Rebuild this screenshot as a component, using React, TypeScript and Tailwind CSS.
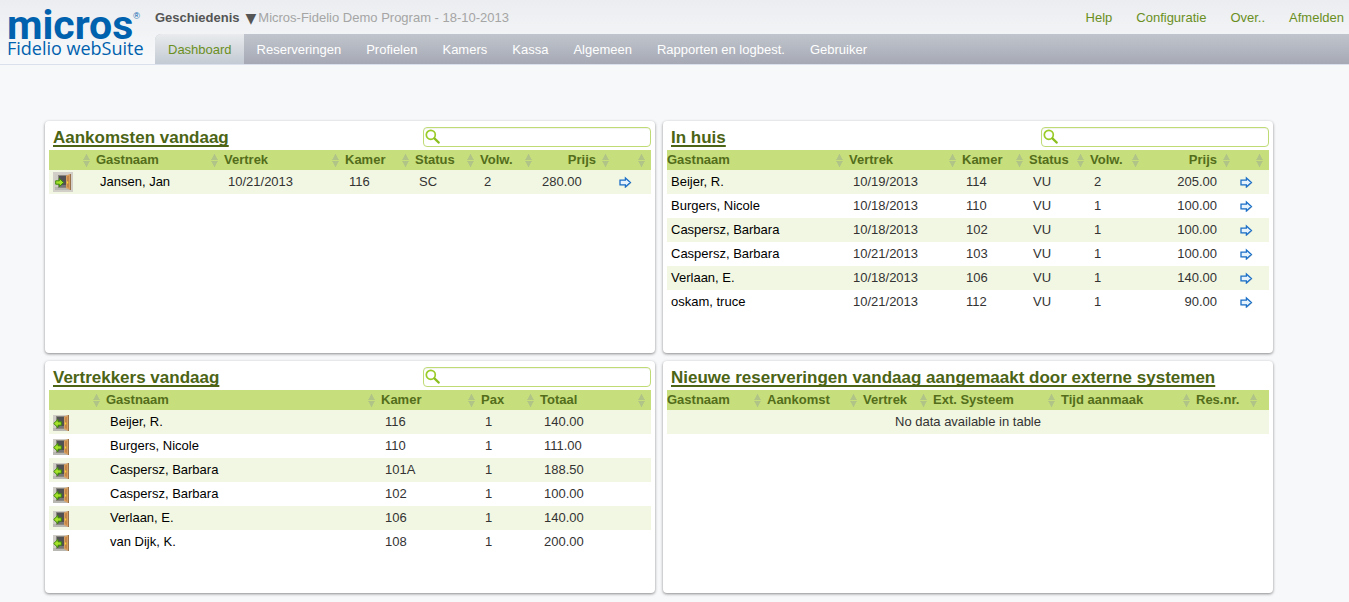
import React from 'react';

interface Column {
  label: string;
  // width class of the column, empty for the one that takes the rest
  width: string;
  sortable?: boolean;
  alignRight?: boolean;
}

interface Reservation {
  name: string;
  departure: string;
  room: string;
  status: string;
  adults: number;
  price: string;
}

interface Departure {
  name: string;
  room: string;
  pax: number;
  total: string;
}

const MENU = [
  'Dashboard',
  'Reserveringen',
  'Profielen',
  'Kamers',
  'Kassa',
  'Algemeen',
  'Rapporten en logbest.',
  'Gebruiker',
];

const USER_LINKS = ['Help', 'Configuratie', 'Over..', 'Afmelden'];

const ARRIVALS: Reservation[] = [
  { name: 'Jansen, Jan', departure: '10/21/2013', room: '116', status: 'SC', adults: 2, price: '280.00' },
];

const IN_HOUSE: Reservation[] = [
  { name: 'Beijer, R.', departure: '10/19/2013', room: '114', status: 'VU', adults: 2, price: '205.00' },
  { name: 'Burgers, Nicole', departure: '10/18/2013', room: '110', status: 'VU', adults: 1, price: '100.00' },
  { name: 'Caspersz, Barbara', departure: '10/18/2013', room: '102', status: 'VU', adults: 1, price: '100.00' },
  { name: 'Caspersz, Barbara', departure: '10/21/2013', room: '103', status: 'VU', adults: 1, price: '100.00' },
  { name: 'Verlaan, E.', departure: '10/18/2013', room: '106', status: 'VU', adults: 1, price: '140.00' },
  { name: 'oskam, truce', departure: '10/21/2013', room: '112', status: 'VU', adults: 1, price: '90.00' },
];

const DEPARTURES: Departure[] = [
  { name: 'Beijer, R.', room: '116', pax: 1, total: '140.00' },
  { name: 'Burgers, Nicole', room: '110', pax: 1, total: '111.00' },
  { name: 'Caspersz, Barbara', room: '101A', pax: 1, total: '188.50' },
  { name: 'Caspersz, Barbara', room: '102', pax: 1, total: '100.00' },
  { name: 'Verlaan, E.', room: '106', pax: 1, total: '140.00' },
  { name: 'van Dijk, K.', room: '108', pax: 1, total: '200.00' },
];

const ARRIVAL_COLUMNS: Column[] = [
  { label: '', width: 'w-[47px]' },
  { label: 'Gastnaam', width: '' },
  { label: 'Vertrek', width: 'w-[121px]' },
  { label: 'Kamer', width: 'w-[70px]' },
  { label: 'Status', width: 'w-[65px]' },
  { label: 'Volw.', width: 'w-[58px]' },
  { label: 'Prijs', width: 'w-[77px]', alignRight: true },
  { label: '', width: 'w-[36px]' },
];

const IN_HOUSE_COLUMNS: Column[] = [
  { label: 'Gastnaam', width: '' },
  { label: 'Vertrek', width: 'w-[113px]' },
  { label: 'Kamer', width: 'w-[67px]' },
  { label: 'Status', width: 'w-[61px]' },
  { label: 'Volw.', width: 'w-[55px]' },
  { label: 'Prijs', width: 'w-[91px]', alignRight: true },
  { label: '', width: 'w-[33px]' },
];

const DEPARTURE_COLUMNS: Column[] = [
  { label: '', width: 'w-[57px]' },
  { label: 'Gastnaam', width: '' },
  { label: 'Kamer', width: 'w-[100px]' },
  { label: 'Pax', width: 'w-[59px]' },
  { label: 'Totaal', width: 'w-[111px]' },
];

const EXTERNAL_COLUMNS: Column[] = [
  { label: 'Gastnaam', width: '' },
  { label: 'Aankomst', width: 'w-[96px]' },
  { label: 'Vertrek', width: 'w-[70px]' },
  { label: 'Ext. Systeem', width: 'w-[128px]' },
  { label: 'Tijd aanmaak', width: 'w-[135px]' },
  { label: 'Res.nr.', width: 'w-[67px]' },
  { label: '', width: 'w-[6px]', sortable: false },
];

const SortIcon: React.FC = () => (
  <svg width="7" height="13" viewBox="0 0 7 13" className="shrink-0 fill-[#b1c487]" aria-hidden="true">
    <path d="M3 0h1v1l1 1v1l1 1v1l1 .5V6H0v-.5L1 5V4l1-1V2l1-1z" />
    <path d="M0 7h7v.5L6 8v1l-1 1v1l-1 1v1H3v-1l-1-1v-1L1 9V8l-1-.5z" />
  </svg>
);

const SearchIcon: React.FC = () => (
  <svg width="16" height="16" viewBox="0 0 16 16" fill="none" aria-hidden="true">
    <circle cx="5.8" cy="5.8" r="4.5" stroke="#9acb28" strokeWidth="1.7" />
    <path d="M9.4 9.4l4.4 4.2" stroke="#8cc01f" strokeWidth="2.2" strokeLinecap="round" />
  </svg>
);

const GoIcon: React.FC = () => (
  <svg width="13" height="12" viewBox="0 0 13 12" aria-hidden="true">
    <path d="M2 5h5V2.6L12.6 7 7 11.8V9.6H2z" fill="#c9cdbd" opacity=".7" />
    <path d="M1 4.2h5.4V2L11.4 6.5l-5 4.5V8.8H1z" fill="#e6f3fd" stroke="#1b6fc8" strokeWidth="1.3" />
  </svg>
);

const DoorIcon: React.FC<{ out?: boolean }> = ({ out }) => (
  <svg width="16" height="16" viewBox="0 0 16 16" aria-hidden="true">
    <path d="M0 0h16v16H0z" fill="#cfccc5" />
    <path d="M0 13h16v3H0z" fill="#b9b7b2" />
    <path d="M3 1h9v13H3z" fill="#8a8780" />
    <path d="M4 2h8v11H4z" fill="#515153" />
    <path d="M4 13l3-2h5v2z" fill="#77777a" />
    <path d="M11 1.5L15 0v16l-4-2z" fill="#d79f62" />
    <path d="M12 2.5l2-.8v12.4l-2-1z" fill="#c58748" />
    <path d="M15 0h1v16h-1z" fill="#98714b" />
    <path d="M12 7.5h1.2v2H12z" fill="#f5d92c" />
    {out ? (
      <path d="M.7 8.5L5 4.4v2.4h3.3v3.4H5v2.4z" fill="#a6e22a" stroke="#3f8a0c" />
    ) : (
      <path d="M8.6 8.5L4.3 4.4v2.4H.7v3.4h3.6v2.4z" fill="#a6e22a" stroke="#3f8a0c" />
    )}
  </svg>
);

const Panel: React.FC<{ title: string; search?: boolean; children: React.ReactNode }> = ({ title, search, children }) => (
  <section className="min-h-58 min-w-0 rounded bg-white px-1 shadow-[0_1px_3px_rgba(0,0,0,0.45)]">
    <div className="flex h-[29px] items-start justify-between">
      <h2 className="pt-[5px] pl-1 text-[17px] leading-6 font-bold whitespace-nowrap text-[#4c6415] underline decoration-2 underline-offset-2 [text-decoration-skip-ink:none]">
        {title}
      </h2>
      {search && (
        <label className="relative mt-1.5 block w-57">
          <span className="absolute top-0.5 left-0.5">
            <SearchIcon />
          </span>
          <input
            type="text"
            aria-label={`Zoeken in ${title}`}
            className="block h-5 w-full rounded border border-[#bfdb76] bg-white pr-1 pl-5 text-[13px] shadow-[inset_0_1px_1px_rgba(0,0,0,0.06)] outline-none"
          />
        </label>
      )}
    </div>
    {children}
  </section>
);

const DataTable: React.FC<{ columns: Column[]; children: React.ReactNode }> = ({ columns, children }) => (
  <table className="w-full table-fixed text-[13px] leading-5 text-[#333]">
    <thead>
      <tr className="h-5 bg-[#c6de7c] text-[#536d1b]">
        {columns.map((col, i) => (
          <th key={i} scope="col" className={`p-0 font-bold ${col.width}`}>
            <div className="flex items-center justify-between gap-1.5 pr-1.5 whitespace-nowrap">
              <span className={col.alignRight ? 'flex-1 text-right' : ''}>{col.label}</span>
              {col.sortable !== false && <SortIcon />}
            </div>
          </th>
        ))}
      </tr>
    </thead>
    <tbody>{children}</tbody>
  </table>
);

const ROW = 'h-6 odd:bg-[#f2f7e3] [&>td]:px-1 [&>td]:py-0 whitespace-nowrap';

const ReservationCells: React.FC<{ item: Reservation; priceClass: string }> = ({ item, priceClass }) => (
  <>
    <td className="text-black">{item.name}</td>
    <td>{item.departure}</td>
    <td>{item.room}</td>
    <td>{item.status}</td>
    <td>{item.adults}</td>
    <td className={priceClass}>{item.price}</td>
    <td>
      <a href="#" aria-label={`Open ${item.name}`} className="block">
        <GoIcon />
      </a>
    </td>
  </>
);

const Header: React.FC = () => (
  <header className="flex border-b border-[#dbe1ec] bg-linear-to-b from-[#ebedf0] to-[#f8f9fb]">
    <a href="#" className="block w-[155px] shrink-0 pl-[7px] text-[#0061ae]">
      <span className="flex h-[38px] items-start">
        <span className="font-[Roboto,sans-serif] text-[41px] leading-[50px] font-bold">micros</span>
        <span className="pt-2.5 text-[9px] leading-3">®</span>
      </span>
      <span className="block font-['Open_Sans',sans-serif] text-[18px] leading-5 whitespace-nowrap">Fidelio webSuite</span>
    </a>
    <div className="min-w-0 flex-1">
      <div className="flex h-[34px] items-center justify-between pt-0.5 pr-[5px]">
        <div className="flex items-center gap-0.5">
          <button type="button" className="flex items-center gap-1.5 font-bold text-[#555]">
            Geschiedenis
            <span className="font-['DejaVu_Sans',sans-serif] text-sm leading-5 font-normal">▼</span>
          </button>
          <span className="text-[#a5a5a5]">Micros-Fidelio Demo Program - 18-10-2013</span>
        </div>
        <div className="flex gap-6 text-[#6a8f1e]">
          {USER_LINKS.map(link => (
            <a key={link} href="#">{link}</a>
          ))}
        </div>
      </div>
      <nav className="flex h-[30px] rounded-tl-md bg-linear-to-b from-[#c0c5cd] to-[#a6a9b4] leading-8">
        {MENU.map((item, i) => (
          <a
            key={item}
            href="#"
            className={
              i === 0
                ? 'rounded-tl-md bg-linear-to-b from-[#e9ebed] to-[#c3cad3] pr-3 pl-[13px] text-[#6a8f1e]'
                : 'pr-3 pl-[13px] text-white'
            }
          >
            {item}
          </a>
        ))}
      </nav>
    </div>
  </header>
);

const App: React.FC = () => (
  <div className="min-h-screen bg-[#f7f8fa] font-['Liberation_Sans',Arial,sans-serif] text-[13px] leading-5">
    <Header />
    <main className="mt-14 mr-[76px] ml-[45px] grid grid-cols-2 gap-2">
      <Panel title="Aankomsten vandaag" search>
        <DataTable columns={ARRIVAL_COLUMNS}>
          {ARRIVALS.map(item => (
            <tr key={item.name} className={ROW}>
              <td>
                <button type="button" aria-label="Inchecken" className="block bg-[#d2cfc8] p-0.5">
                  <DoorIcon />
                </button>
              </td>
              <ReservationCells item={item} priceClass="" />
            </tr>
          ))}
        </DataTable>
      </Panel>

      <Panel title="In huis" search>
        <DataTable columns={IN_HOUSE_COLUMNS}>
          {IN_HOUSE.map((item, i) => (
            <tr key={i} className={ROW}>
              <ReservationCells item={item} priceClass="pr-[19px]! text-right" />
            </tr>
          ))}
        </DataTable>
      </Panel>

      <Panel title="Vertrekkers vandaag" search>
        <DataTable columns={DEPARTURE_COLUMNS}>
          {DEPARTURES.map((item, i) => (
            <tr key={i} className={ROW}>
              <td>
                <button type="button" aria-label="Uitchecken" className="block pt-0.5">
                  <DoorIcon out />
                </button>
              </td>
              <td className="text-black">{item.name}</td>
              <td>{item.room}</td>
              <td>{item.pax}</td>
              <td>{item.total}</td>
            </tr>
          ))}
        </DataTable>
      </Panel>

      <Panel title="Nieuwe reserveringen vandaag aangemaakt door externe systemen">
        <DataTable columns={EXTERNAL_COLUMNS}>
          <tr className={ROW}>
            <td colSpan={EXTERNAL_COLUMNS.length} className="text-center">
              No data available in table
            </td>
          </tr>
        </DataTable>
      </Panel>
    </main>
  </div>
);

export default App;
